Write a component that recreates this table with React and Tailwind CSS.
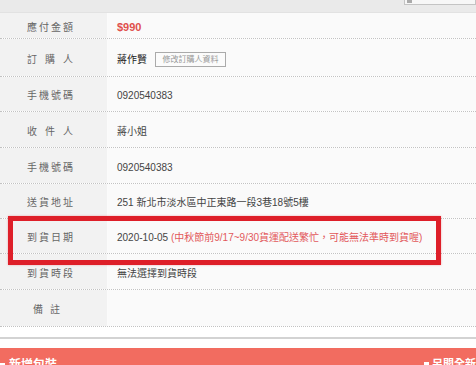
import React from 'react';

const rows = [
  { label: ['應', '付', '金', '額'], h: 'h-[26px]', value: <span className="text-[11px] font-bold text-[#e0504d]">$990</span> },
  {
    label: ['訂', '購', '人'],
    h: 'h-[38px]',
    value: (
      <div className="flex items-center gap-[8px]">
        <span className="text-[#222]">蔣作賢</span>
        <span className="h-[15px] w-[71px] border border-[#aaa] bg-[#fbfbfb] text-[8px] leading-[13px] text-[#999] text-center">修改訂購人資料</span>
      </div>
    ),
  },
  { label: ['手', '機', '號', '碼'], h: 'h-[35px]', value: '0920540383' },
  { label: ['收', '件', '人'], h: 'h-[36px]', value: '蔣小姐' },
  { label: ['手', '機', '號', '碼'], h: 'h-[36px]', value: '0920540383' },
  { label: ['送', '貨', '地', '址'], h: 'h-[35px]', value: '251 新北市淡水區中正東路一段3巷18號5樓' },
  {
    label: ['到', '貨', '日', '期'],
    h: 'h-[35px]',
    value: (
      <span>
        2020-10-05 <span className="text-[#e2585a]">(中秋節前9/17~9/30貨運配送繁忙，可能無法準時到貨喔)</span>
      </span>
    ),
  },
  { label: ['到', '貨', '時', '段'], h: 'h-[36px]', value: '無法選擇到貨時段' },
  { label: ['備', '註'], h: 'h-[37px]', value: '', narrow: true },
];

const App = () => {
  return (
    <div className="w-[476px] h-[365px] overflow-hidden bg-white font-['Liberation_Sans','Noto_Sans_CJK_TC',sans-serif]">
      {/* cut-off toolbar at the top */}
      <div className="h-[13px] bg-[#eaeaea] border-b border-[#e2e2e2] flex justify-end">
        <div className="mt-[-10px] h-[15px] w-[72px] border border-[#c4c4c4] bg-[#f7f7f7] flex items-end pl-[2px] pb-[1px]">
          <span className="w-[5px] h-[4px] bg-[#aaa]"></span>
        </div>
      </div>

      <div className="relative">
        {rows.map((r, i) => (
          <div key={i} className={`flex ${r.h} border-b border-dotted border-[#c2c2c2]`}>
            <div className="w-[108px] shrink-0 bg-[#f2f2f2] border-r border-[#fbfbfb] flex items-center pt-[3px]">
              <div
                className={`flex justify-between text-[10px] text-[#666] ${r.narrow ? 'ml-[33px] w-[27px]' : 'ml-[27px] w-[46px]'}`}
              >
                {r.label.map((c, j) => (
                  <span key={j}>{c}</span>
                ))}
              </div>
            </div>
            <div className="flex-1 bg-[#fafafa] flex items-center pl-[9px] pt-[3px] text-[10px] text-[#444]">{r.value}</div>
          </div>
        ))}

        {/* annotation box */}
        <div className="absolute left-[8px] top-[203px] w-[433px] h-[49px] border-[5px] border-[#de1f29] shadow-[0_0_2px_rgba(222,31,41,0.35)]"></div>
      </div>

      <div className="h-[10px] bg-white"></div>
      <div className="h-[2px] bg-[#d3d3d3]"></div>
      <div className="h-[9px] bg-white"></div>

      <div className="h-[30px] bg-[#f26c60] flex justify-between items-start pt-[8px] text-[12px] font-bold text-white">
        <div className="flex items-center gap-[4px]">
          <span className="w-[5px] h-[5px] bg-white"></span>
          <span>新增包裝</span>
        </div>
        <div className="flex items-center gap-[3px] text-[11px]">
          <span className="w-[5px] h-[5px] bg-white"></span>
          <span>另開全新</span>
        </div>
      </div>
    </div>
  );
};

export default App;
